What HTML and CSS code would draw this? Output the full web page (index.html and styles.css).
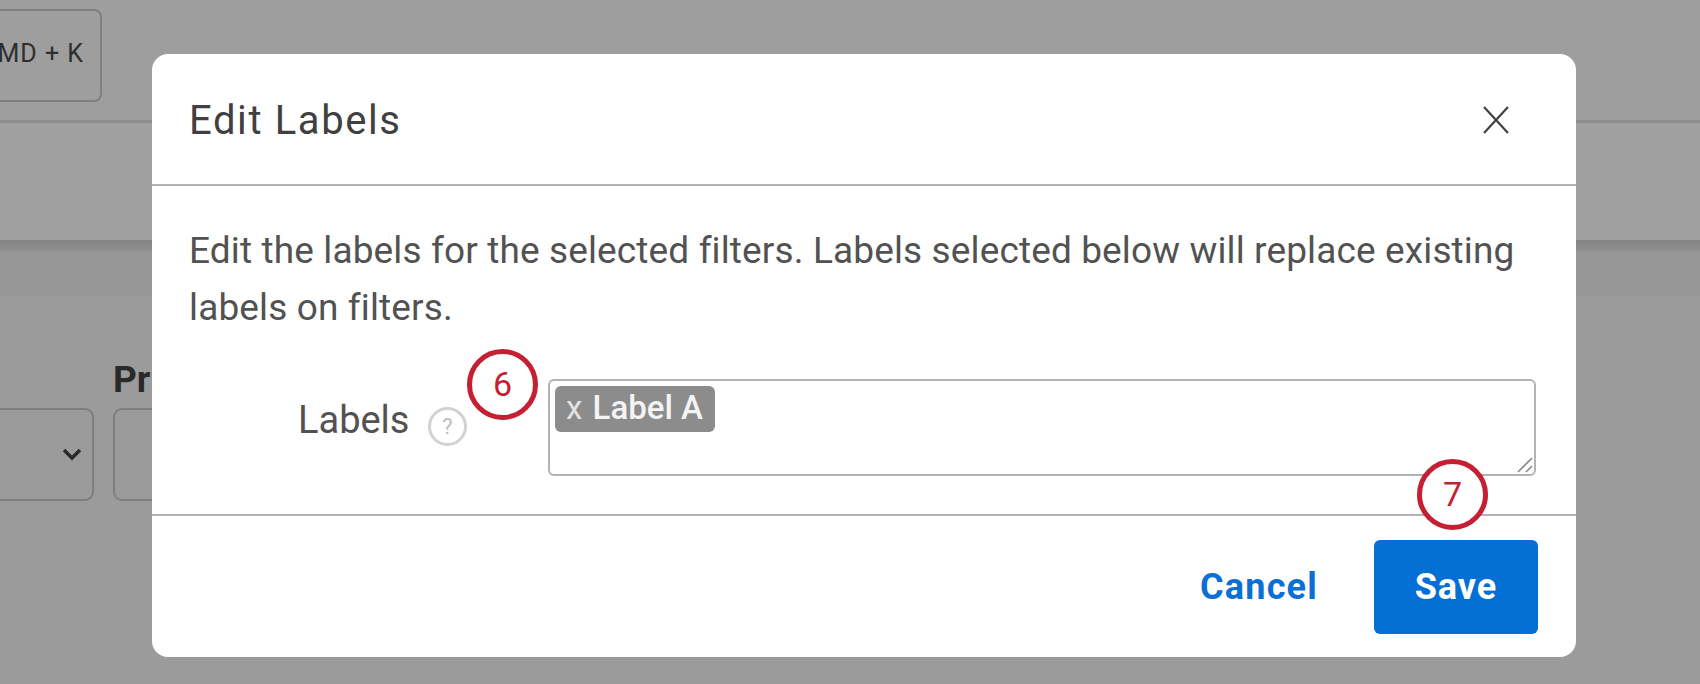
FILE: index.html
```html
<!DOCTYPE html>
<html lang="en">
<head>
    <meta charset="UTF-8">
    <title>Edit Labels</title>
    <link rel="stylesheet" href="styles.css">
</head>
<body>
    <header class="topbar">
        <button class="shortcut">CMD + K</button>
    </header>
    <div class="subbar"></div>
    <main class="filters">
        <div class="select-field">
            <svg class="chevron" viewBox="0 0 20 13"><path d="M2 2l8 8 8-8" fill="none" stroke="#2a2a2a" stroke-width="3.5"/></svg>
        </div>
        <div class="text-field">
            <span class="field-title">Pr</span>
            <div class="text-input"></div>
        </div>
    </main>

    <div class="modal">
        <div class="modal-header">
            <h2>Edit Labels</h2>
            <svg class="close" viewBox="0 0 26 28"><path d="M1 1l24 26M25 1L1 27" fill="none" stroke="#404040" stroke-width="2.2"/></svg>
        </div>
        <div class="modal-body">
            <p>Edit the labels for the selected filters. Labels selected below will replace existing labels on filters.</p>
            <div class="label-row">
                <label>Labels</label>
                <span class="help">?</span>
                <div class="tag-box">
                    <span class="tag"><span class="tag-x">x</span> Label A</span>
                    <svg class="resize" viewBox="0 0 16 16"><path d="M1 15L15 1M9 15l6-6" fill="none" stroke="#888" stroke-width="1.6"/></svg>
                </div>
            </div>
        </div>
        <div class="modal-footer">
            <a class="cancel">Cancel</a>
            <button class="save">Save</button>
        </div>
        <span class="callout callout-six">6</span>
        <span class="callout callout-seven">7</span>
    </div>
</body>
</html>
```

FILE: styles.css
```css
* {
    margin: 0;
    padding: 0;
    box-sizing: border-box;
}

body {
    width: 1700px;
    height: 684px;
    overflow: hidden;
    position: relative;
    font-family: 'Roboto', sans-serif;
    background-color: #9e9e9e;
}

.topbar {
    height: 123px;
    padding-top: 9px;
    border-bottom: 3px solid #8e8e8e;
}

.shortcut {
    display: block;
    width: 142px;
    height: 93px;
    margin-left: -40px;
    padding-right: 16px;
    padding-bottom: 4px;
    text-align: right;
    white-space: nowrap;
    font-family: inherit;
    font-size: 25px;
    letter-spacing: 1px;
    color: #2e2e2e;
    background: transparent;
    border: 2px solid #7f7f7f;
    border-radius: 8px;
}

.subbar {
    height: 117px;
    background-color: #a0a0a0;
}

.filters {
    height: 444px;
    display: flex;
    gap: 19px;
    padding-top: 168px;
    background: linear-gradient(#838383, #8f8f8f 10px, #969696 12px, #969696 55px, #9b9b9b 56px);
}

.select-field {
    width: 94px;
    height: 93px;
    border: 2px solid #7f7f7f;
    border-left: none;
    border-radius: 0 9px 9px 0;
    display: flex;
    align-items: center;
    justify-content: flex-end;
    padding-right: 10px;
}

.chevron {
    width: 20px;
    height: 13px;
}

.text-field {
    position: relative;
}

.field-title {
    position: absolute;
    left: 0;
    top: -50px;
    font-weight: 700;
    font-size: 37px;
    color: #2a2a2a;
}

.text-input {
    width: 100px;
    height: 93px;
    border: 2px solid #7f7f7f;
    border-radius: 9px;
}

.modal {
    position: absolute;
    left: 152px;
    top: 54px;
    width: 1424px;
    height: 603px;
    display: flex;
    flex-direction: column;
    background-color: #fff;
    border-radius: 16px;
}

.modal-header {
    height: 132px;
    padding: 2px 67px 0 37px;
    display: flex;
    align-items: center;
    justify-content: space-between;
    border-bottom: 2px solid #b3b3b3;
}

.modal-header h2 {
    font-weight: 400;
    font-size: 40px;
    letter-spacing: 1.6px;
    color: #404040;
}

.close {
    width: 26px;
    height: 28px;
}

.modal-body {
    height: 330px;
    padding: 36px 40px 0 37px;
    border-bottom: 2px solid #b3b3b3;
}

.modal-body p {
    font-size: 37px;
    letter-spacing: 0.13px;
    line-height: 57px;
    color: #525252;
}

.label-row {
    position: relative;
    display: flex;
    margin-top: 43px;
}

.label-row label {
    width: 159px;
    margin-left: 109px;
    font-size: 38px;
    line-height: 50px;
    color: #525252;
    padding-top: 16px;
}

.help {
    position: absolute;
    left: 239px;
    top: 28px;
    width: 39px;
    height: 39px;
    border: 3px solid #d2d2d2;
    border-radius: 50%;
    font-size: 22px;
    line-height: 33px;
    text-align: center;
    color: #bdbdbd;
}

.tag-box {
    position: absolute;
    left: 359px;
    top: 0;
    width: 988px;
    height: 97px;
    border: 2px solid #b3b3b3;
    border-radius: 6px;
    padding: 5px;
}

.tag {
    display: inline-block;
    height: 46px;
    padding: 0 12px 0 11px;
    font-weight: 500;
    font-size: 33px;
    line-height: 44px;
    color: #f4f4f4;
    background-color: #8c8c8c;
    border-radius: 6px;
}

.tag-x {
    margin-right: 2px;
    font-weight: 400;
    color: #e2e2e2;
}

.resize {
    position: absolute;
    right: 1px;
    bottom: 1px;
    width: 16px;
    height: 16px;
}

.modal-footer {
    flex: 1;
    display: flex;
    align-items: flex-start;
    justify-content: flex-end;
    gap: 56px;
    padding: 24px 38px 0 0;
}

.cancel {
    font-weight: 700;
    font-size: 36px;
    letter-spacing: 1.2px;
    line-height: 94px;
    color: #0b70d6;
}

.save {
    width: 164px;
    height: 94px;
    font-family: inherit;
    font-weight: 700;
    font-size: 36px;
    letter-spacing: 1px;
    color: #fff;
    background-color: #0470d6;
    border: none;
    border-radius: 6px;
}

.callout {
    position: absolute;
    width: 71px;
    height: 71px;
    border: 5px solid #c41f32;
    border-radius: 50%;
    background-color: #fff;
    font-size: 34px;
    line-height: 60px;
    text-align: center;
    color: #c41f32;
}

.callout-six {
    left: 315px;
    top: 295px;
}

.callout-seven {
    left: 1265px;
    top: 405px;
}
```
